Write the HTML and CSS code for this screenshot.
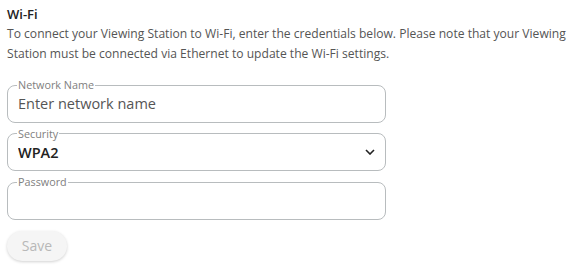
FILE: index.html
```html
<!DOCTYPE html>
<html lang="en">
<head>
    <meta charset="UTF-8">
    <meta name="viewport" content="width=device-width, initial-scale=1.0">
    <title>Wi-Fi</title>
    <link rel="stylesheet" href="styles.css">
</head>
<body>
    <div class="container">
        <h2>Wi-Fi</h2>
        <p class="note">To connect your Viewing Station to Wi-Fi, enter the credentials below. Please note that your Viewing Station must be connected via Ethernet to update the Wi-Fi settings.</p>
        <form id="wifiForm">
            <fieldset class="field">
                <legend>Network Name</legend>
                <input type="text" id="ssid" placeholder="Enter network name">
            </fieldset>
            <fieldset class="field">
                <legend>Security</legend>
                <div class="select-wrap">
                    <select id="security">
                        <option>WPA2</option>
                        <option>WPA3</option>
                        <option>WEP</option>
                        <option>None</option>
                    </select>
                    <svg class="chevron" width="10" height="6" viewBox="0 0 10 6"><path d="M1 1l4 4 4-4" fill="none" stroke="#222" stroke-width="1.6"/></svg>
                </div>
            </fieldset>
            <fieldset class="field">
                <legend>Password</legend>
                <input type="password" id="password">
            </fieldset>
            <button type="submit" disabled>Save</button>
        </form>
    </div>
</body>
</html>
```

FILE: styles.css
```css
body {
    font-family: 'Open Sans', sans-serif;
    margin: 0;
    padding: 0;
    background-color: #fff;
    color: #333;
}

.container {
    padding: 4px 0 4px 7px;
}

h2 {
    font-size: 13px;
    font-weight: 600;
    color: #222;
    margin: 0;
    line-height: 20px;
}

.note {
    font-size: 12.1px;
    color: #555;
    line-height: 20px;
    margin: 0 0 15px;
}

.field {
    width: 379px;
    box-sizing: border-box;
    border: 1px solid #b8bcbe;
    border-radius: 8px;
    margin: 0 0 5px;
    padding: 1px 10px 7px;
    min-width: 0;
}

legend {
    font-size: 10.8px;
    color: #808080;
    padding: 0 1px;
    margin-left: -1px;
    line-height: 12px;
}

input[type="text"], input[type="password"], select {
    width: 100%;
    border: none;
    outline: none;
    padding: 0;
    font-family: 'Open Sans', sans-serif;
    font-size: 14.5px;
    height: 22px;
    color: #222;
    background: transparent;
}

input::placeholder {
    color: #555;
}

.select-wrap {
    position: relative;
}

select {
    appearance: none;
    font-weight: 600;
}

.chevron {
    position: absolute;
    right: 0;
    top: 8px;
    pointer-events: none;
}

button {
    margin-top: 6px;
    width: 60px;
    height: 30px;
    border: none;
    border-radius: 15px;
    background-color: #f5f5f5;
    color: #b8b8b8;
    font-family: 'Open Sans', sans-serif;
    font-size: 14px;
    box-shadow: 0 1px 3px rgba(0, 0, 0, 0.18);
}
```
